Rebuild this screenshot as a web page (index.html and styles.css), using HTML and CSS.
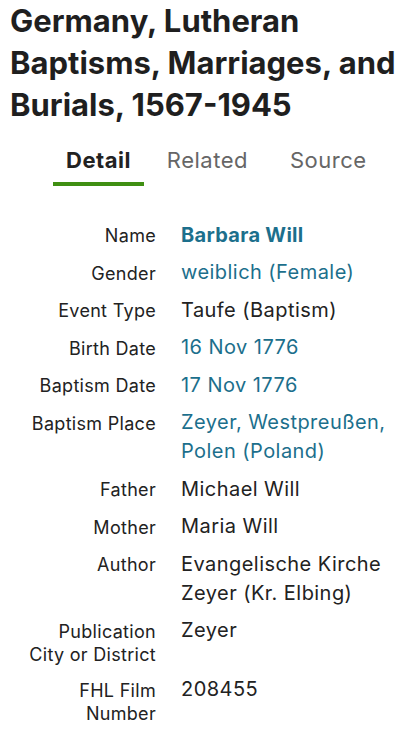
FILE: index.html
```html
<!DOCTYPE html>
<html lang="de">
<head>
<meta charset="utf-8">
<title>Germany, Lutheran Baptisms, Marriages, and Burials, 1567-1945</title>
<link rel="stylesheet" href="styles.css">
</head>
<body>
<h1 class="title">Germany, Lutheran Baptisms, Marriages, and Burials, 1567-1945</h1>
<nav class="tabs">
  <span class="tab active">Detail</span>
  <span class="tab">Related</span>
  <span class="tab tab-last">Source</span>
</nav>
<dl class="facts">
  <dt>Name</dt><dd class="link strong">Barbara Will</dd>
  <dt>Gender</dt><dd class="link">weiblich (Female)</dd>
  <dt>Event Type</dt><dd>Taufe (Baptism)</dd>
  <dt>Birth Date</dt><dd class="link">16 Nov 1776</dd>
  <dt>Baptism Date</dt><dd class="link">17 Nov 1776</dd>
  <dt>Baptism Place</dt><dd class="link">Zeyer, Westpreußen, Polen (Poland)</dd>
  <dt>Father</dt><dd>Michael Will</dd>
  <dt>Mother</dt><dd>Maria Will</dd>
  <dt>Author</dt><dd>Evangelische Kirche Zeyer (Kr. Elbing)</dd>
  <dt>Publication City or District</dt><dd>Zeyer</dd>
  <dt>FHL Film Number</dt><dd>208455</dd>
</dl>
</body>
</html>
```
FILE: styles.css
```css
html, body {
  margin: 0;
  padding: 0;
  background: #fff;
}
body {
  font-family: Inter, "Noto Sans", sans-serif;
  color: #222;
}
.title {
  margin: 0;
  padding: 0 10px;
  font-size: 31px;
  line-height: 42px;
  font-weight: 700;
  color: #1f1f1f;
}
.tabs {
  display: flex;
  gap: 10px;
  margin: 19px 0 0 53px;
}
.tab {
  padding: 0 13px 6px;
  font-size: 22px;
  line-height: 31px;
  letter-spacing: 0.5px;
  color: #666;
  border-bottom: 4px solid transparent;
}
.tab-last {
  margin-left: 6px;
}
.tab.active {
  color: #222;
  font-weight: 700;
  border-bottom-color: #3f8f12;
}
.facts {
  display: grid;
  grid-template-columns: 130px 1fr;
  column-gap: 25px;
  row-gap: 8.5px;
  margin: 34.5px 16px 0 26px;
}
.facts dt {
  margin: 0;
  text-align: right;
  font-size: 18px;
  line-height: 23.5px;
  letter-spacing: 0.3px;
  padding-top: 3.5px;
  color: #222;
}
.facts dd {
  margin: 0;
  font-size: 20px;
  line-height: 29px;
  letter-spacing: 0.45px;
  color: #222;
}
.facts dd.link {
  color: #1c6f8c;
}
.facts dd.strong {
  font-weight: 700;
  letter-spacing: 0.3px;
}
```
